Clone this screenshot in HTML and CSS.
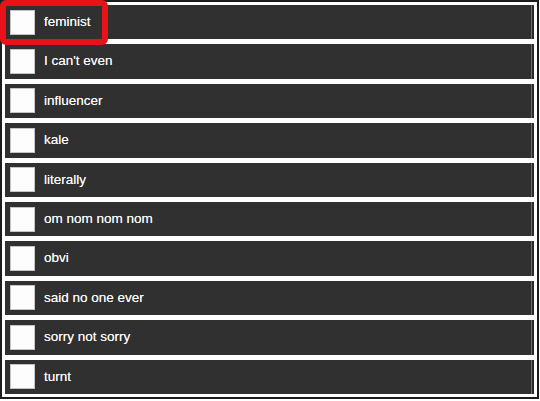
FILE: index.html
```html
<!DOCTYPE html>
<html>
<head>
<meta charset="utf-8">
<link rel="stylesheet" href="styles.css">
</head>
<body>
<div class="frame">
  <ul class="list">
    <li class="row"><span class="box"></span><span class="label">feminist</span></li>
    <li class="row"><span class="box"></span><span class="label">I can't even</span></li>
    <li class="row"><span class="box"></span><span class="label">influencer</span></li>
    <li class="row"><span class="box"></span><span class="label">kale</span></li>
    <li class="row"><span class="box"></span><span class="label">literally</span></li>
    <li class="row"><span class="box"></span><span class="label">om nom nom nom</span></li>
    <li class="row"><span class="box"></span><span class="label">obvi</span></li>
    <li class="row"><span class="box"></span><span class="label">said no one ever</span></li>
    <li class="row"><span class="box"></span><span class="label">sorry not sorry</span></li>
    <li class="row"><span class="box"></span><span class="label">turnt</span></li>
  </ul>
  <div class="highlight"></div>
</div>
</body>
</html>
```

FILE: styles.css
```css
html, body {
  margin: 0;
  padding: 0;
  background: #ffffff;
}

.frame {
  position: relative;
  box-sizing: border-box;
  width: 539px;
  height: 399px;
  border: 2px solid #1c1c1c;
  padding: 3px;
  background: #ffffff;
}

.list {
  list-style: none;
  margin: 0;
  padding: 0;
  height: 100%;
  display: grid;
  grid-template-rows: repeat(10, 1fr);
  row-gap: 5px;
}

.row {
  display: flex;
  align-items: center;
  gap: 9px;
  padding-left: 5px;
  background: #303030;
  box-shadow: inset -2px 0 0 #2a2a2a, inset -3px 0 0 #6c6c6c;
  font-family: "Liberation Sans", Arial, sans-serif;
  font-size: 13.5px;
  color: #ffffff;
  text-shadow: 0 0 0.6px rgba(255, 255, 255, 0.7);
}

.box {
  box-sizing: border-box;
  width: 25px;
  height: 25px;
  background: #fdfdfd;
  border: 1px solid #c4c4c4;
  flex: none;
}

.label {
  line-height: 1;
  padding-bottom: 1px;
}

.highlight {
  position: absolute;
  left: -2px;
  top: -2px;
  width: 108px;
  height: 45px;
  box-sizing: border-box;
  border: 6px solid #e8121b;
  border-radius: 6px;
}
```
